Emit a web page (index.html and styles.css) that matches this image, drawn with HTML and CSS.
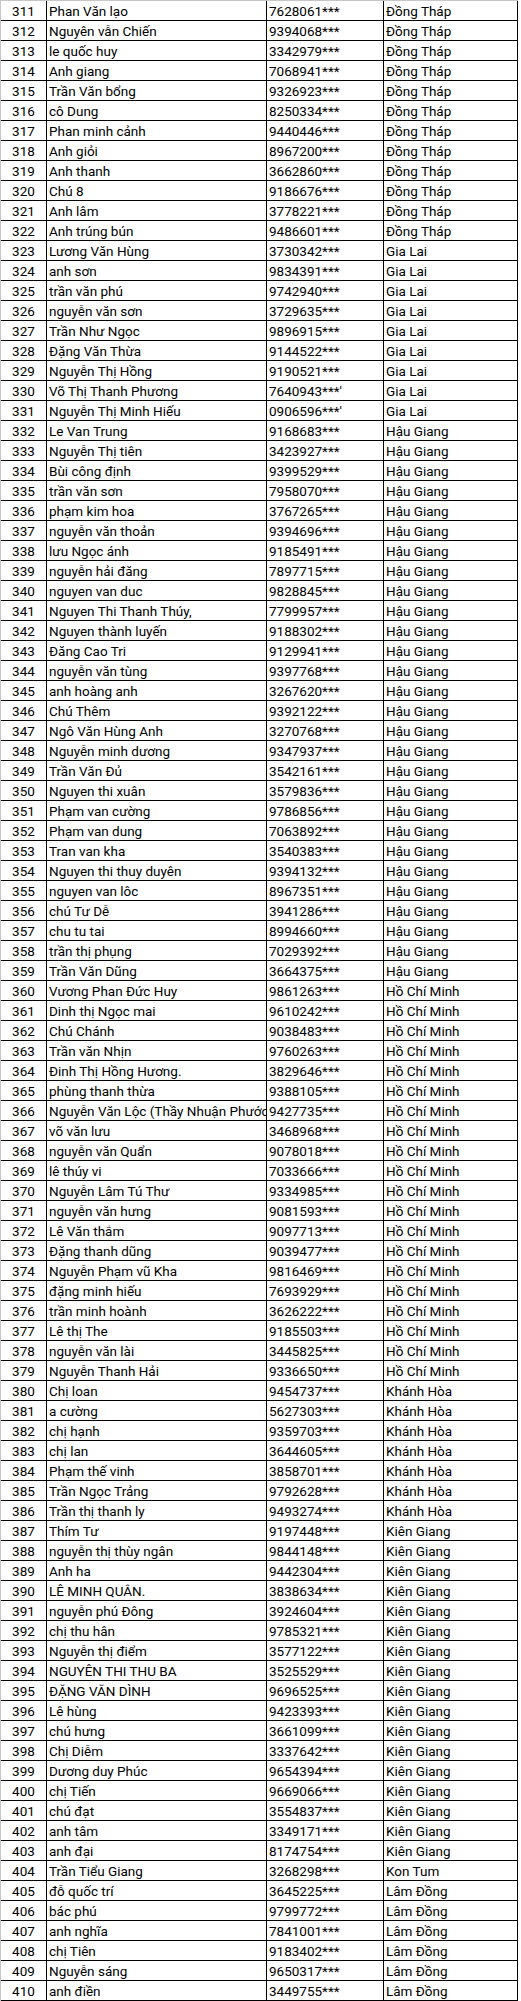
FILE: index.html
```html
<!DOCTYPE html>
<html lang="vi">
<head>
<meta charset="utf-8">
<title>Danh sách</title>
<link rel="stylesheet" href="styles.css">
</head>
<body>
<table class="sheet">
<colgroup><col class="c-no"><col class="c-name"><col class="c-phone"><col class="c-prov"></colgroup>
<tbody>
<tr><td class="no">311</td><td>Phan Văn lạo</td><td>7628061***</td><td>Đồng Tháp</td></tr>
<tr><td class="no">312</td><td>Nguyên vẫn Chiến</td><td>9394068***</td><td>Đồng Tháp</td></tr>
<tr><td class="no">313</td><td>le quốc huy</td><td>3342979***</td><td>Đồng Tháp</td></tr>
<tr><td class="no">314</td><td>Anh giang</td><td>7068941***</td><td>Đồng Tháp</td></tr>
<tr><td class="no">315</td><td>Trần Văn bổng</td><td>9326923***</td><td>Đồng Tháp</td></tr>
<tr><td class="no">316</td><td>cô Dung</td><td>8250334***</td><td>Đồng Tháp</td></tr>
<tr><td class="no">317</td><td>Phan minh cảnh</td><td>9440446***</td><td>Đồng Tháp</td></tr>
<tr><td class="no">318</td><td>Anh giỏi</td><td>8967200***</td><td>Đồng Tháp</td></tr>
<tr><td class="no">319</td><td>Anh thanh</td><td>3662860***</td><td>Đồng Tháp</td></tr>
<tr><td class="no">320</td><td>Chú 8</td><td>9186676***</td><td>Đồng Tháp</td></tr>
<tr><td class="no">321</td><td>Anh lâm</td><td>3778221***</td><td>Đồng Tháp</td></tr>
<tr><td class="no">322</td><td>Anh trúng bún</td><td>9486601***</td><td>Đồng Tháp</td></tr>
<tr><td class="no">323</td><td>Lương Văn Hùng</td><td>3730342***</td><td>Gia Lai</td></tr>
<tr><td class="no">324</td><td>anh sơn</td><td>9834391***</td><td>Gia Lai</td></tr>
<tr><td class="no">325</td><td>trần văn phú</td><td>9742940***</td><td>Gia Lai</td></tr>
<tr><td class="no">326</td><td>nguyễn văn sơn</td><td>3729635***</td><td>Gia Lai</td></tr>
<tr><td class="no">327</td><td>Trần Như Ngọc</td><td>9896915***</td><td>Gia Lai</td></tr>
<tr><td class="no">328</td><td>Đặng Văn Thừa</td><td>9144522***</td><td>Gia Lai</td></tr>
<tr><td class="no">329</td><td>Nguyễn Thị Hồng</td><td>9190521***</td><td>Gia Lai</td></tr>
<tr><td class="no">330</td><td>Võ Thị Thanh Phương</td><td>7640943***'</td><td>Gia Lai</td></tr>
<tr><td class="no">331</td><td>Nguyễn Thị Minh Hiếu</td><td>0906596***'</td><td>Gia Lai</td></tr>
<tr><td class="no">332</td><td>Le Van Trung</td><td>9168683***</td><td>Hậu Giang</td></tr>
<tr><td class="no">333</td><td>Nguyễn Thị tiên</td><td>3423927***</td><td>Hậu Giang</td></tr>
<tr><td class="no">334</td><td>Bùi công định</td><td>9399529***</td><td>Hậu Giang</td></tr>
<tr><td class="no">335</td><td>trần văn sơn</td><td>7958070***</td><td>Hậu Giang</td></tr>
<tr><td class="no">336</td><td>phạm kim hoa</td><td>3767265***</td><td>Hậu Giang</td></tr>
<tr><td class="no">337</td><td>nguyễn văn thoản</td><td>9394696***</td><td>Hậu Giang</td></tr>
<tr><td class="no">338</td><td>lưu Ngọc ánh</td><td>9185491***</td><td>Hậu Giang</td></tr>
<tr><td class="no">339</td><td>nguyễn hải đăng</td><td>7897715***</td><td>Hậu Giang</td></tr>
<tr><td class="no">340</td><td>nguyen van duc</td><td>9828845***</td><td>Hậu Giang</td></tr>
<tr><td class="no">341</td><td>Nguyen Thi Thanh Thúy,</td><td>7799957***</td><td>Hậu Giang</td></tr>
<tr><td class="no">342</td><td>Nguyen thành luyến</td><td>9188302***</td><td>Hậu Giang</td></tr>
<tr><td class="no">343</td><td>Đăng Cao Tri</td><td>9129941***</td><td>Hậu Giang</td></tr>
<tr><td class="no">344</td><td>nguyễn văn tùng</td><td>9397768***</td><td>Hậu Giang</td></tr>
<tr><td class="no">345</td><td>anh hoàng anh</td><td>3267620***</td><td>Hậu Giang</td></tr>
<tr><td class="no">346</td><td>Chú Thêm</td><td>9392122***</td><td>Hậu Giang</td></tr>
<tr><td class="no">347</td><td>Ngô Văn Hùng Anh</td><td>3270768***</td><td>Hậu Giang</td></tr>
<tr><td class="no">348</td><td>Nguyễn minh dương</td><td>9347937***</td><td>Hậu Giang</td></tr>
<tr><td class="no">349</td><td>Trần Văn Đủ</td><td>3542161***</td><td>Hậu Giang</td></tr>
<tr><td class="no">350</td><td>Nguyen thi xuân</td><td>3579836***</td><td>Hậu Giang</td></tr>
<tr><td class="no">351</td><td>Phạm van cường</td><td>9786856***</td><td>Hậu Giang</td></tr>
<tr><td class="no">352</td><td>Phạm van dung</td><td>7063892***</td><td>Hậu Giang</td></tr>
<tr><td class="no">353</td><td>Tran van kha</td><td>3540383***</td><td>Hậu Giang</td></tr>
<tr><td class="no">354</td><td>Nguyen thi thuy duyên</td><td>9394132***</td><td>Hậu Giang</td></tr>
<tr><td class="no">355</td><td>nguyen van lôc</td><td>8967351***</td><td>Hậu Giang</td></tr>
<tr><td class="no">356</td><td>chú Tư Dễ</td><td>3941286***</td><td>Hậu Giang</td></tr>
<tr><td class="no">357</td><td>chu tu tai</td><td>8994660***</td><td>Hậu Giang</td></tr>
<tr><td class="no">358</td><td>trần thị phụng</td><td>7029392***</td><td>Hậu Giang</td></tr>
<tr><td class="no">359</td><td>Trần Văn Dũng</td><td>3664375***</td><td>Hậu Giang</td></tr>
<tr><td class="no">360</td><td>Vương Phan Đức Huy</td><td>9861263***</td><td>Hồ Chí Minh</td></tr>
<tr><td class="no">361</td><td>Dinh thị Ngọc mai</td><td>9610242***</td><td>Hồ Chí Minh</td></tr>
<tr><td class="no">362</td><td>Chú Chánh</td><td>9038483***</td><td>Hồ Chí Minh</td></tr>
<tr><td class="no">363</td><td>Trần văn Nhịn</td><td>9760263***</td><td>Hồ Chí Minh</td></tr>
<tr><td class="no">364</td><td>Đinh Thị Hồng Hương.</td><td>3829646***</td><td>Hồ Chí Minh</td></tr>
<tr><td class="no">365</td><td>phùng thanh thừa</td><td>9388105***</td><td>Hồ Chí Minh</td></tr>
<tr><td class="no">366</td><td>Nguyễn Văn Lộc (Thầy Nhuận Phước)</td><td>9427735***</td><td>Hồ Chí Minh</td></tr>
<tr><td class="no">367</td><td>võ văn lưu</td><td>3468968***</td><td>Hồ Chí Minh</td></tr>
<tr><td class="no">368</td><td>nguyễn văn Quẩn</td><td>9078018***</td><td>Hồ Chí Minh</td></tr>
<tr><td class="no">369</td><td>lê thúy vi</td><td>7033666***</td><td>Hồ Chí Minh</td></tr>
<tr><td class="no">370</td><td>Nguyễn Lâm Tú Thư</td><td>9334985***</td><td>Hồ Chí Minh</td></tr>
<tr><td class="no">371</td><td>nguyễn văn hưng</td><td>9081593***</td><td>Hồ Chí Minh</td></tr>
<tr><td class="no">372</td><td>Lê Văn thắm</td><td>9097713***</td><td>Hồ Chí Minh</td></tr>
<tr><td class="no">373</td><td>Đặng thanh dũng</td><td>9039477***</td><td>Hồ Chí Minh</td></tr>
<tr><td class="no">374</td><td>Nguyễn Phạm vũ Kha</td><td>9816469***</td><td>Hồ Chí Minh</td></tr>
<tr><td class="no">375</td><td>đặng minh hiếu</td><td>7693929***</td><td>Hồ Chí Minh</td></tr>
<tr><td class="no">376</td><td>trần minh hoành</td><td>3626222***</td><td>Hồ Chí Minh</td></tr>
<tr><td class="no">377</td><td>Lê thị The</td><td>9185503***</td><td>Hồ Chí Minh</td></tr>
<tr><td class="no">378</td><td>nguyễn văn lài</td><td>3445825***</td><td>Hồ Chí Minh</td></tr>
<tr><td class="no">379</td><td>Nguyễn Thanh Hải</td><td>9336650***</td><td>Hồ Chí Minh</td></tr>
<tr><td class="no">380</td><td>Chị loan</td><td>9454737***</td><td>Khánh Hòa</td></tr>
<tr><td class="no">381</td><td>a cường</td><td>5627303***</td><td>Khánh Hòa</td></tr>
<tr><td class="no">382</td><td>chị hạnh</td><td>9359703***</td><td>Khánh Hòa</td></tr>
<tr><td class="no">383</td><td>chị lan</td><td>3644605***</td><td>Khánh Hòa</td></tr>
<tr><td class="no">384</td><td>Phạm thế vinh</td><td>3858701***</td><td>Khánh Hòa</td></tr>
<tr><td class="no">385</td><td>Trần Ngọc Trảng</td><td>9792628***</td><td>Khánh Hòa</td></tr>
<tr><td class="no">386</td><td>Trần thị thanh ly</td><td>9493274***</td><td>Khánh Hòa</td></tr>
<tr><td class="no">387</td><td>Thím Tư</td><td>9197448***</td><td>Kiên Giang</td></tr>
<tr><td class="no">388</td><td>nguyễn thị thùy ngân</td><td>9844148***</td><td>Kiên Giang</td></tr>
<tr><td class="no">389</td><td>Anh ha</td><td>9442304***</td><td>Kiên Giang</td></tr>
<tr><td class="no">390</td><td>LÊ MINH QUÂN.</td><td>3838634***</td><td>Kiên Giang</td></tr>
<tr><td class="no">391</td><td>nguyễn phú Đông</td><td>3924604***</td><td>Kiên Giang</td></tr>
<tr><td class="no">392</td><td>chị thu hân</td><td>9785321***</td><td>Kiên Giang</td></tr>
<tr><td class="no">393</td><td>Nguyễn thị điểm</td><td>3577122***</td><td>Kiên Giang</td></tr>
<tr><td class="no">394</td><td>NGUYÊN THI THU BA</td><td>3525529***</td><td>Kiên Giang</td></tr>
<tr><td class="no">395</td><td>ĐẶNG VĂN DÌNH</td><td>9696525***</td><td>Kiên Giang</td></tr>
<tr><td class="no">396</td><td>Lê hùng</td><td>9423393***</td><td>Kiên Giang</td></tr>
<tr><td class="no">397</td><td>chú hưng</td><td>3661099***</td><td>Kiên Giang</td></tr>
<tr><td class="no">398</td><td>Chị Diễm</td><td>3337642***</td><td>Kiên Giang</td></tr>
<tr><td class="no">399</td><td>Dương duy Phúc</td><td>9654394***</td><td>Kiên Giang</td></tr>
<tr><td class="no">400</td><td>chị Tiến</td><td>9669066***</td><td>Kiên Giang</td></tr>
<tr><td class="no">401</td><td>chú đạt</td><td>3554837***</td><td>Kiên Giang</td></tr>
<tr><td class="no">402</td><td>anh tâm</td><td>3349171***</td><td>Kiên Giang</td></tr>
<tr><td class="no">403</td><td>anh đại</td><td>8174754***</td><td>Kiên Giang</td></tr>
<tr><td class="no">404</td><td>Trần Tiểu Giang</td><td>3268298***</td><td>Kon Tum</td></tr>
<tr><td class="no">405</td><td>đỗ quốc trí</td><td>3645225***</td><td>Lâm Đồng</td></tr>
<tr><td class="no">406</td><td>bác phú</td><td>9799772***</td><td>Lâm Đồng</td></tr>
<tr><td class="no">407</td><td>anh nghĩa</td><td>7841001***</td><td>Lâm Đồng</td></tr>
<tr><td class="no">408</td><td>chị Tiên</td><td>9183402***</td><td>Lâm Đồng</td></tr>
<tr><td class="no">409</td><td>Nguyễn sáng</td><td>9650317***</td><td>Lâm Đồng</td></tr>
<tr><td class="no">410</td><td>anh điền</td><td>3449755***</td><td>Lâm Đồng</td></tr>
</tbody>
</table>
</body>
</html>
```
FILE: styles.css
```css
html, body {
  margin: 0;
  padding: 0;
  background: #ffffff;
}

.sheet {
  border-collapse: separate;
  border-spacing: 0;
  table-layout: fixed;
  width: 518px;
  border-top: 1px solid #c6c6c6;
  border-left: 1px solid #c6c6c6;
  font-family: Roboto, "Noto Sans", sans-serif;
  font-size: 13.5px;
  color: #000;
}

.c-no { width: 46px; }
.c-name { width: 220px; }
.c-phone { width: 117px; }
.c-prov { width: 134px; }

.sheet td {
  box-sizing: border-box;
  height: 20px;
  padding: 2px 0 0 2px;
  line-height: 17px;
  border-right: 1px solid #000;
  border-bottom: 1px solid #000;
  white-space: nowrap;
  overflow: hidden;
  text-align: left;
  vertical-align: top;
}

.sheet td.no {
  padding-left: 0;
  text-align: center;
}
```
